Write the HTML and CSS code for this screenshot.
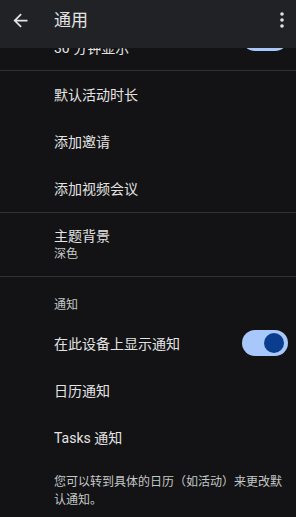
FILE: index.html
```html
<!DOCTYPE html>
<html lang="zh-CN">
<head>
<meta charset="utf-8">
<title>通用</title>
<link rel="stylesheet" href="styles.css">
</head>
<body>
<div class="app">
  <header class="topbar">
    <button class="icon-btn back" aria-label="返回">
      <svg width="21" height="21" viewBox="0 0 24 24"><path fill="#e3e3e3" d="M20 11H7.83l5.59-5.59L12 4l-8 8 8 8 1.41-1.41L7.83 13H20v-2z"/></svg>
    </button>
    <h1 class="title">通用</h1>
    <button class="icon-btn more" aria-label="更多">
      <svg width="6" height="18" viewBox="0 0 6 18"><circle cx="3" cy="3" r="1.8" fill="#e3e3e3"/><circle cx="3" cy="9" r="1.8" fill="#e3e3e3"/><circle cx="3" cy="15" r="1.8" fill="#e3e3e3"/></svg>
    </button>
  </header>

  <main class="content">
    <section class="group first">
      <div class="row scrolled">
        <span class="label tail">30 分钟显示</span>
        <span class="switch on"><span class="thumb"></span></span>
      </div>
    </section>

    <section class="group">
      <div class="row"><span class="label">默认活动时长</span></div>
      <div class="row"><span class="label">添加邀请</span></div>
      <div class="row"><span class="label">添加视频会议</span></div>
    </section>

    <section class="group">
      <div class="row stacked">
        <span class="label">主题背景</span>
        <span class="sub">深色</span>
      </div>
    </section>

    <section class="group last">
      <div class="section-title">通知</div>
      <div class="row">
        <span class="label">在此设备上显示通知</span>
        <span class="switch on"><span class="thumb"></span></span>
      </div>
      <div class="row"><span class="label">日历通知</span></div>
      <div class="row"><span class="label">Tasks 通知</span></div>
      <p class="footnote">您可以转到具体的日历（如活动）来更改默认通知。</p>
    </section>
  </main>
</div>
</body>
</html>
```

FILE: styles.css
```css
html, body {
  margin: 0;
  padding: 0;
  background: #131315;
}

body {
  font-family: Roboto, "Noto Sans CJK SC", sans-serif;
  color: #e3e3e3;
}

.app {
  position: relative;
  width: 296px;
  height: 517px;
  overflow: hidden;
  background: #131315;
}

.topbar {
  position: absolute;
  top: 0;
  left: 0;
  right: 0;
  z-index: 2;
  height: 48px;
  box-sizing: border-box;
  padding: 0 6px 8px 10px;
  display: flex;
  align-items: center;
  background: #212226;
}

.icon-btn {
  border: 0;
  padding: 0;
  margin: 0;
  background: none;
  display: flex;
  align-items: center;
  justify-content: center;
}

.back {
  width: 21px;
  height: 21px;
}

.title {
  margin: 0 0 0 23px;
  flex: 1;
  font-size: 17px;
  font-weight: 400;
  line-height: 24px;
  color: #e3e3e3;
}

.more {
  width: 10px;
  height: 20px;
  margin-right: 3px;
}

.content {
  display: flex;
  flex-direction: column;
  padding-top: 2px;
}

.group {
  border-bottom: 1px solid #2f3034;
}

.group.last {
  border-bottom: 0;
}

.row {
  display: flex;
  align-items: center;
  justify-content: space-between;
  height: 47px;
  box-sizing: border-box;
  padding: 0 8px 0 54px;
}

.label {
  font-size: 14px;
  line-height: 20px;
  color: #e3e3e3;
}

.row.scrolled {
  height: 68px;
}

.label.tail {
  align-self: flex-end;
  margin-bottom: 12px;
}

.row.scrolled .switch {
  margin-top: 4px;
}

.stacked {
  flex-direction: column;
  align-items: flex-start;
  justify-content: flex-start;
  height: 63px;
  padding-top: 13px;
}

.sub {
  font-size: 12px;
  line-height: 16px;
  color: #c4c7c5;
}

.section-title {
  padding: 20px 8px 7px 54px;
  font-size: 12px;
  line-height: 16px;
  color: #c4c7c5;
}

.switch {
  position: relative;
  flex: none;
  width: 46px;
  height: 26px;
  border-radius: 13px;
  background: #a8c7fa;
  margin-top: -2px;
}

.switch .thumb {
  position: absolute;
  top: 3px;
  right: 4px;
  width: 20px;
  height: 20px;
  border-radius: 50%;
  background: #0b3d8f;
}

.footnote {
  margin: 0;
  padding: 12px 12px 0 54px;
  font-size: 12px;
  line-height: 18px;
  color: #c4c7c5;
}
```
